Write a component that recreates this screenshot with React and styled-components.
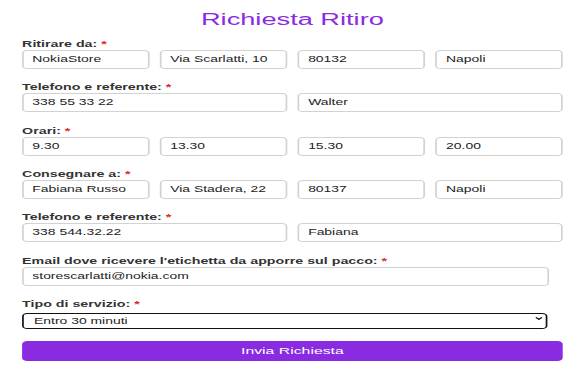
import React from "react";
import styled, { createGlobalStyle } from "styled-components";

const GlobalStyle = createGlobalStyle`
  body {
    margin: 0;
    background: #fff;
    font-family: "Liberation Sans", Arial, sans-serif;
    overflow: hidden;
  }
`;

// the reference shot is stretched sideways, so the form is laid out narrow and widened
const Page = styled.div`
  width: 344px;
  padding-top: 10px;
  transform: scaleX(1.7);
  transform-origin: top left;
`;

const Container = styled.div`
  width: 318px;
  margin: 0 auto;
`;

const Title = styled.h1`
  margin: 0 0 9px;
  font-size: 16px;
  line-height: 19px;
  font-weight: normal;
  color: #8a2be2;
  text-align: center;
`;

const Form = styled.form`
  display: flex;
  flex-direction: column;
  gap: 12.33px;
`;

const Field = styled.div`
  display: flex;
  flex-direction: column;
`;

const Label = styled.label`
  font-size: 8.4px;
  line-height: 12px;
  font-weight: bold;
  color: #333;
`;

const Required = styled.span`
  color: #e0282e;
`;

const Row = styled.div`
  display: grid;
  grid-template-columns: repeat(${(p) => p.$cols}, 1fr);
  gap: 6.5px;
`;

const Input = styled.input`
  box-sizing: border-box;
  width: ${(p) => p.$width || "100%"};
  min-width: 0;
  height: 19px;
  padding: 0 5px;
  border: 1px solid #d2d2d2;
  border-radius: 3px;
  background: #fff;
  color: #222;
  font-family: "Liberation Sans", Arial, sans-serif;
  font-size: 8.2px;
  outline: none;
`;

const SelectBox = styled.div`
  position: relative;
  width: 309px;
`;

const Select = styled.select`
  box-sizing: border-box;
  width: 100%;
  height: 16px;
  padding: 0 0 0 6px;
  border: 1px solid #111;
  border-radius: 3px;
  background: #fff;
  color: #222;
  font-family: "Liberation Sans", Arial, sans-serif;
  font-size: 8.2px;
  appearance: none;
  outline: none;
`;

const Chevron = styled.svg`
  position: absolute;
  right: 3px;
  top: 7.5px;
  display: block;
  width: 4px;
  height: 3px;
  pointer-events: none;
`;

const Button = styled.button`
  height: 20px;
  margin-top: -1px;
  border: none;
  border-radius: 3px;
  background: #8a2be2;
  color: #fff;
  font-family: "Liberation Sans", Arial, sans-serif;
  font-size: 9.3px;
  cursor: pointer;
`;

const groups = [
  { label: "Ritirare da:", values: ["NokiaStore", "Via Scarlatti, 10", "80132", "Napoli"] },
  { label: "Telefono e referente:", values: ["338 55 33 22", "Walter"] },
  { label: "Orari:", values: ["9.30", "13.30", "15.30", "20.00"] },
  { label: "Consegnare a:", values: ["Fabiana Russo", "Via Stadera, 22", "80137", "Napoli"] },
  { label: "Telefono e referente:", values: ["338 544.32.22", "Fabiana"] },
];

function FieldLabel({ children }) {
  return (
    <Label>
      {children} <Required>*</Required>
    </Label>
  );
}

export default function App() {
  return (
    <>
      <GlobalStyle />
      <Page>
        <Container>
          <Title>Richiesta Ritiro</Title>
          <Form onSubmit={(e) => e.preventDefault()}>
            {groups.map((g, i) => (
              <Field key={i}>
                <FieldLabel>{g.label}</FieldLabel>
                <Row $cols={g.values.length}>
                  {g.values.map((v, j) => (
                    <Input key={j} defaultValue={v} />
                  ))}
                </Row>
              </Field>
            ))}
            <Field>
              <FieldLabel>Email dove ricevere l'etichetta da apporre sul pacco:</FieldLabel>
              <Input $width="310px" defaultValue="storescarlatti@nokia.com" />
            </Field>
            <Field>
              <FieldLabel>Tipo di servizio:</FieldLabel>
              <SelectBox>
                <Select defaultValue="30">
                  <option value="30">Entro 30 minuti</option>
                  <option value="60">Entro 60 minuti</option>
                  <option value="120">Entro 2 ore</option>
                </Select>
                <Chevron viewBox="0 0 10 7" preserveAspectRatio="none">
                  <path d="M1 1.5 L5 5.5 L9 1.5" fill="none" stroke="#111" strokeWidth="2.4" strokeLinecap="round" />
                </Chevron>
              </SelectBox>
            </Field>
            <Button type="submit">Invia Richiesta</Button>
          </Form>
        </Container>
      </Page>
    </>
  );
}
